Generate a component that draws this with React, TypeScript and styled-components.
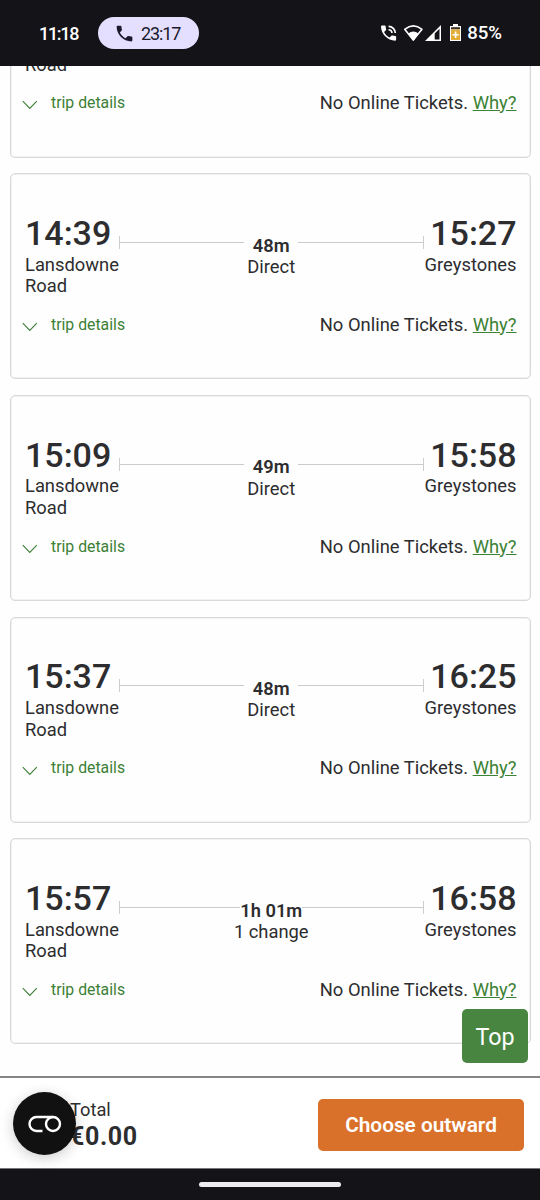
import React from 'react';
import styled, { createGlobalStyle } from 'styled-components';

const GlobalStyle = createGlobalStyle`
  * { box-sizing: border-box; }
  body { margin: 0; background: #fff; font-family: Roboto, sans-serif; color: #2d2d2f; }
`;

const Screen = styled.div`
  display: flex;
  flex-direction: column;
  width: 540px;
  height: 1200px;
  overflow: hidden;
  background: #fefefe;
`;

const StatusBar = styled.header`
  display: flex;
  flex: none;
  align-items: center;
  height: 66px;
  padding: 0 38px 0 39px;
  background: #141318;
  color: #fff;
`;

const Clock = styled.span`
  width: 59px;
  font-size: 18px;
  font-weight: 500;
  letter-spacing: -1.3px;
`;

const CallPill = styled.div`
  display: flex;
  align-items: center;
  gap: 6px;
  width: 101px;
  height: 32px;
  padding-left: 16px;
  border-radius: 16px;
  background: #e4dfff;
  color: #1b1a2c;
  font-size: 18px;
  letter-spacing: -1.1px;
`;

const StatusIcons = styled.div`
  display: flex;
  align-items: center;
  margin-left: auto;
`;

const Battery = styled.span`
  margin-left: 4px;
  font-size: 18.6px;
  font-weight: 500;
`;

const Results = styled.main`
  display: flex;
  flex: none;
  flex-direction: column;
  gap: 15.67px;
  height: 1010px;
  padding: 0 9px 0 10px;
  overflow: hidden;
`;

const Card = styled.article<{ $cut?: boolean }>`
  display: flex;
  flex: none;
  flex-direction: column;
  height: ${(p) => (p.$cut ? '103.7px' : '206px')};
  margin-top: ${(p) => (p.$cut ? '-12px' : '0')};
  padding: ${(p) => (p.$cut ? '0' : '39.8px')} 13.5px 0 14px;
  border: 1px solid #d9d9d9;
  border-top-width: ${(p) => (p.$cut ? '0' : '1px')};
  border-radius: ${(p) => (p.$cut ? '0 0 5px 5px' : '5px')};
  box-shadow: inset 0 0 0 0.5px #e6e6e6;
`;

const Journey = styled.div`
  display: grid;
  grid-template-columns: 94px 1fr 93px;
  height: 87px;
`;

const Stop = styled.div<{ $end?: boolean }>`
  display: flex;
  flex-direction: column;
  align-items: ${(p) => (p.$end ? 'flex-end' : 'flex-start')};
`;

const Time = styled.div`
  height: 39.6px;
  line-height: 38px;
  font-size: 34px;
  font-weight: 500;
`;

const Station = styled.div`
  width: 94px;
  font-size: 18.35px;
  line-height: 21.5px;
`;

const EndStation = styled(Station)`
  text-align: right;
`;

const Middle = styled.div`
  display: flex;
  flex-direction: column;
  align-items: center;
  padding-top: 22px;
`;

const Track = styled.div`
  display: flex;
  align-items: center;
  width: 100%;
  height: 13px;
  border: solid #cdcdcd;
  border-width: 0 1px;
`;

const Rule = styled.span`
  flex: 1;
  height: 1px;
  background: #cbcbcb;
`;

const Duration = styled.span<{ $long?: boolean }>`
  width: ${(p) => (p.$long ? '62px' : '54px')};
  padding-top: 6px;
  text-align: center;
  font-size: 18.3px;
  font-weight: 600;
  line-height: 20px;
  white-space: nowrap;
`;

const Changes = styled.div`
  margin-top: 7px;
  font-size: 18.35px;
  line-height: 21px;
`;

const Footer = styled.div<{ $cut?: boolean }>`
  display: flex;
  justify-content: space-between;
  margin-top: ${(p) => (p.$cut ? '15.4px' : '11.8px')};
  height: 23px;
  line-height: 23px;
`;

const Details = styled.a`
  display: flex;
  color: #3c7f35;
  font-size: 15.8px;
  gap: 13px;
  margin-left: -3px;
  line-height: 23px;
  svg { margin-top: 9.5px; }
`;

const Notice = styled.span`
  font-size: 18.4px;
`;

const Why = styled.a`
  color: #3c8235;
  text-decoration: underline;
`;

const BottomBar = styled.footer`
  display: flex;
  flex: none;
  align-items: center;
  height: 93px;
  padding: 3px 16px 0 13px;
  border-top: 2px solid #858585;
  border-bottom: 1px solid #77777a;
  background: #fff;
`;

const Consent = styled.button`
  display: grid;
  place-items: center;
  position: relative;
  flex: none;
  width: 63px;
  height: 63px;
  margin-bottom: 2px;
  padding: 0;
  border: 0;
  border-radius: 50%;
  background: #111;
  box-shadow: 0 3px 14px rgba(0, 0, 0, 0.2);
`;

const Total = styled.div`
  margin: 2px 0 0 -6px;
  font-size: 18.3px;
  line-height: 22px;
`;

const Amount = styled.div`
  font-size: 25px;
  font-weight: 700;
  letter-spacing: 0.6px;
  line-height: 31px;
`;

const Choose = styled.button`
  width: 206px;
  height: 52px;
  margin-left: auto;
  border: 0;
  border-radius: 5px;
  background: #da712b;
  color: #fff;
  font: 600 20.8px Roboto, sans-serif;
`;

const TopButton = styled.button`
  position: fixed;
  left: 462px;
  top: 1009.4px;
  width: 66px;
  height: 54px;
  padding: 1px 0 0;
  border: 0;
  border-radius: 5px;
  background: #488541;
  color: #fff;
  font: 400 23.3px Roboto, sans-serif;
`;

const NavBar = styled.div`
  display: flex;
  flex: 1;
  justify-content: center;
  padding-top: 12.5px;
  background: #141318;
`;

const Handle = styled.div`
  width: 142px;
  height: 5px;
  border-radius: 3px;
  background: #ececee;
`;

const handset =
  'M6.62 10.79c1.44 2.83 3.76 5.14 6.59 6.59l2.2-2.2c.27-.27.67-.36 1.02-.24 1.12.37 2.33.57 3.57.57.55 0 1 .45 1 1V20c0 .55-.45 1-1 1C10.61 21 3 13.39 3 4c0-.55.45-1 1-1h3.5c.55 0 1 .45 1 1 0 1.25.2 2.45.57 3.57.11.35.03.74-.25 1.02z';

function TripFooter({ cut }: { cut?: boolean }) {
  return (
    <Footer $cut={cut}>
      <Details>
        <svg width="16" height="10" viewBox="0 0 16 10" fill="none" stroke="currentColor" strokeWidth="1.1">
          <path d="M.8 1.2l7 7.2 7-7.2" />
        </svg>
        trip details
      </Details>
      <Notice>
        No Online Tickets. <Why>Why?</Why>
      </Notice>
    </Footer>
  );
}

const trips = [
  { from: '14:39', to: '15:27', duration: '48m', changes: 'Direct' },
  { from: '15:09', to: '15:58', duration: '49m', changes: 'Direct' },
  { from: '15:37', to: '16:25', duration: '48m', changes: 'Direct' },
  { from: '15:57', to: '16:58', duration: '1h 01m', changes: '1 change' },
];

export default function App() {
  return (
    <Screen>
      <GlobalStyle />
      <StatusBar>
        <Clock>11:18</Clock>
        <CallPill>
          <svg width="21" height="21" viewBox="0 0 24 24" fill="currentColor">
            <path d={handset} />
          </svg>
          23:17
        </CallPill>
        <StatusIcons>
          <svg width="84" height="24" viewBox="379 21 84 24" fill="#fff">
            <g transform="translate(378.5 23) scale(.84)">
              <path d={handset} />
              <path d="M12 3v2a7 7 0 0 1 7 7h2a9 9 0 0 0-9-9zm0 4v2a3 3 0 0 1 3 3h2a5 5 0 0 0-5-5z" />
            </g>
            <path d="M404.7 29.3Q413.3 22.3 422 29.3L413.3 40z" fill="none" stroke="#fff" strokeWidth="1.6" strokeLinejoin="round" />
            <path d="M408 33.7Q413.3 29.2 418.7 33.7L413.3 41z" />
            <path d="M425 41L441 25v16z" />
            <path d="M434.7 33.5L439.5 28.8v10.8h-4.8z" fill="#141318" />
            <path d="M450 26h3v-2h5v2h3v15h-11z" />
            <path d="M451 29.5h9V40h-9z" fill="#e2ad36" />
            <path d="M451 27.2h9v2h-9z" fill="#3b3020" />
            <path d="M454.8 31.5h1.6v2.4h2.3v1.6h-2.3v2.4h-1.6v-2.4h-2.3v-1.6h2.3z" />
          </svg>
          <Battery>85%</Battery>
        </StatusIcons>
      </StatusBar>
      <Results>
        <Card $cut>
          <Station>Road</Station>
          <TripFooter cut />
        </Card>
        {trips.map((t) => (
          <Card key={t.from}>
            <Journey>
              <Stop>
                <Time>{t.from}</Time>
                <Station>Lansdowne Road</Station>
              </Stop>
              <Middle>
                <Track>
                  <Rule />
                  <Duration $long={t.duration.length > 3}>{t.duration}</Duration>
                  <Rule />
                </Track>
                <Changes>{t.changes}</Changes>
              </Middle>
              <Stop $end>
                <Time>{t.to}</Time>
                <EndStation>Greystones</EndStation>
              </Stop>
            </Journey>
            <TripFooter />
          </Card>
        ))}
      </Results>
      <BottomBar>
        <Consent aria-label="Cookie settings">
          <svg width="34" height="18" viewBox="0 0 34 18" fill="none" stroke="#fff" strokeWidth="2.4">
            <path d="M14.5 16H8.5a7 7 0 0 1 0-14H25" />
            <circle cx="25" cy="9" r="7" />
          </svg>
        </Consent>
        <Total>
          Total
          <Amount>€0.00</Amount>
        </Total>
        <Choose>Choose outward</Choose>
      </BottomBar>
      <NavBar>
        <Handle />
      </NavBar>
      <TopButton>Top</TopButton>
    </Screen>
  );
}
